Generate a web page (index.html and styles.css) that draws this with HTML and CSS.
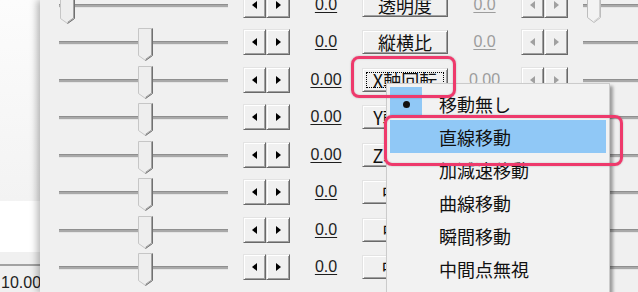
FILE: index.html
```html
<!DOCTYPE html>
<html lang="ja">
<head>
  <meta charset="UTF-8">
  <title>拡張描画</title>
  <link rel="stylesheet" href="styles.css">
</head>
<body>
  <svg class="defs" width="0" height="0">
    <defs>
      <g id="track">
        <rect x="0" y="18" width="169" height="1" fill="#8f8f8f"/>
        <rect x="0" y="19" width="169" height="2" fill="#a9a9a9"/>
        <rect x="0" y="21" width="169" height="1" fill="#e4e4e4"/>
      </g>
      <g id="thumb">
        <path d="M0.5 0.5H14.5V27.5L7.5 32.5L0.5 27.5Z" fill="#eeeeee" stroke="#c6c6c6"/>
        <path d="M13.5 1V27L7.5 31.3" fill="none" stroke="#a3a3a3"/>
        <path d="M14.5 0.5V27.5L7.5 32.5" fill="none" stroke="#707070"/>
      </g>
      <g id="thumb-off">
        <path d="M0.5 0.5H13.5V26.5L7 31.5L0.5 26.5Z" fill="#f3f3f3" stroke="#bdbdbd"/>
        <path d="M12.5 1V26L7 30.3" fill="none" stroke="#d0d0d0"/>
      </g>
    </defs>
  </svg>

  <div class="desk">
    <div class="back">
      <div class="back-top"></div>
      <div class="back-white"></div>
      <div class="back-bar"></div>
      <div class="back-foot">10.00</div>
    </div>

    <div class="win">
      <div class="rows">
        <div class="row">
          <svg class="slider" viewBox="0 0 169 38"><use href="#track"/><use href="#thumb" x="1" y="5"/></svg>
          <div class="spin"><span class="sb"><i class="tri-l"></i></span><span class="sb"><i class="tri-r"></i></span></div>
          <div class="val">0.0</div>
          <button class="name">透明度</button>
          <div class="val off">0.0</div>
          <div class="spin off"><span class="sb"><i class="tri-l"></i></span><span class="sb"><i class="tri-r"></i></span></div>
          <svg class="slider r" viewBox="0 0 169 38"><use href="#track"/><use href="#thumb-off" x="4" y="5"/></svg>
        </div>
        <div class="row">
          <svg class="slider" viewBox="0 0 169 38"><use href="#track"/><use href="#thumb" x="79" y="5"/></svg>
          <div class="spin"><span class="sb"><i class="tri-l"></i></span><span class="sb"><i class="tri-r"></i></span></div>
          <div class="val">0.0</div>
          <button class="name">縦横比</button>
          <div class="val off">0.0</div>
          <div class="spin off"><span class="sb"><i class="tri-l"></i></span><span class="sb"><i class="tri-r"></i></span></div>
          <svg class="slider r" viewBox="0 0 169 38"><use href="#track"/></svg>
        </div>
        <div class="row">
          <svg class="slider" viewBox="0 0 169 38"><use href="#track"/><use href="#thumb" x="79" y="5"/></svg>
          <div class="spin"><span class="sb"><i class="tri-l"></i></span><span class="sb"><i class="tri-r"></i></span></div>
          <div class="val">0.00</div>
          <button class="name focus">X軸回転</button>
          <div class="val off">0.00</div>
          <div class="spin off"><span class="sb"><i class="tri-l"></i></span><span class="sb"><i class="tri-r"></i></span></div>
          <svg class="slider r" viewBox="0 0 169 38"><use href="#track"/></svg>
        </div>
        <div class="row">
          <svg class="slider" viewBox="0 0 169 38"><use href="#track"/><use href="#thumb" x="79" y="5"/></svg>
          <div class="spin"><span class="sb"><i class="tri-l"></i></span><span class="sb"><i class="tri-r"></i></span></div>
          <div class="val">0.00</div>
          <button class="name">Y軸回転</button>
          <div class="val off">0.00</div>
          <div class="spin off"><span class="sb"><i class="tri-l"></i></span><span class="sb"><i class="tri-r"></i></span></div>
          <svg class="slider r" viewBox="0 0 169 38"><use href="#track"/></svg>
        </div>
        <div class="row">
          <svg class="slider" viewBox="0 0 169 38"><use href="#track"/><use href="#thumb" x="79" y="5"/></svg>
          <div class="spin"><span class="sb"><i class="tri-l"></i></span><span class="sb"><i class="tri-r"></i></span></div>
          <div class="val">0.00</div>
          <button class="name">Z軸回転</button>
          <div class="val off">0.00</div>
          <div class="spin off"><span class="sb"><i class="tri-l"></i></span><span class="sb"><i class="tri-r"></i></span></div>
          <svg class="slider r" viewBox="0 0 169 38"><use href="#track"/></svg>
        </div>
        <div class="row">
          <svg class="slider" viewBox="0 0 169 38"><use href="#track"/><use href="#thumb" x="79" y="5"/></svg>
          <div class="spin"><span class="sb"><i class="tri-l"></i></span><span class="sb"><i class="tri-r"></i></span></div>
          <div class="val">0.0</div>
          <button class="name">中心X</button>
          <div class="val off">0.0</div>
          <div class="spin off"><span class="sb"><i class="tri-l"></i></span><span class="sb"><i class="tri-r"></i></span></div>
          <svg class="slider r" viewBox="0 0 169 38"><use href="#track"/></svg>
        </div>
        <div class="row">
          <svg class="slider" viewBox="0 0 169 38"><use href="#track"/><use href="#thumb" x="79" y="5"/></svg>
          <div class="spin"><span class="sb"><i class="tri-l"></i></span><span class="sb"><i class="tri-r"></i></span></div>
          <div class="val">0.0</div>
          <button class="name">中心Y</button>
          <div class="val off">0.0</div>
          <div class="spin off"><span class="sb"><i class="tri-l"></i></span><span class="sb"><i class="tri-r"></i></span></div>
          <svg class="slider r" viewBox="0 0 169 38"><use href="#track"/></svg>
        </div>
        <div class="row">
          <svg class="slider" viewBox="0 0 169 38"><use href="#track"/><use href="#thumb" x="79" y="5"/></svg>
          <div class="spin"><span class="sb"><i class="tri-l"></i></span><span class="sb"><i class="tri-r"></i></span></div>
          <div class="val">0.0</div>
          <button class="name">中心Z</button>
          <div class="val off">0.0</div>
          <div class="spin off"><span class="sb"><i class="tri-l"></i></span><span class="sb"><i class="tri-r"></i></span></div>
          <svg class="slider r" viewBox="0 0 169 38"><use href="#track"/></svg>
        </div>
      </div>
    </div>

    <!-- popup menu over the X軸回転 button -->
    <div class="menu">
      <div class="item"><span class="chk on"><i class="dot"></i></span>移動無し</div>
      <div class="item hot"><span class="chk"></span>直線移動</div>
      <div class="item"><span class="chk"></span>加減速移動</div>
      <div class="item"><span class="chk"></span>曲線移動</div>
      <div class="item"><span class="chk"></span>瞬間移動</div>
      <div class="item"><span class="chk"></span>中間点無視</div>
    </div>

    <div class="mark m1"></div>
    <div class="mark m2"></div>
  </div>
</body>
</html>
```

FILE: styles.css
```css
* { box-sizing: border-box; }
body { margin: 0; width: 638px; height: 292px; overflow: hidden; background: #f0f0f0; font-family: "Liberation Sans", Arial, sans-serif; }
.defs { position: absolute; }

.desk { position: relative; display: flex; height: 292px; overflow: hidden; }

/* window behind, on the left */
.back { flex: none; width: 40px; display: flex; flex-direction: column; }
.back-top { height: 206px; background: linear-gradient(#fcfcfc, #f3f3f3); }
.back-white { height: 52px; background: #fff; }
.back-bar { height: 14px; background: #f0f0f0; border-bottom: 2px solid #a2a2a2; }
.back-foot { flex: 1; padding: 8px 0 0 1px; font-size: 16px; line-height: 18px; color: #222; white-space: nowrap; background: #f0f0f0; }

/* main window */
.win { flex: 1; position: relative; z-index: 1; overflow: hidden; background: #f0f0f0; box-shadow: -3px 0 7px rgba(0, 0, 0, 0.28); }
.rows { margin-top: -14px; }
.row { height: 37.5px; display: flex; align-items: center; }
.row > * { flex: none; }

.slider { width: 169px; height: 38px; margin-left: 19px; overflow: visible; }
.slider.r { margin-left: 15px; }

.spin { display: flex; margin-left: 15px; }
.spin.off { margin-left: 0; }
.sb { width: 23px; height: 26px; display: flex; align-items: center; justify-content: center; background: #f0f0f0; border: 1px solid; border-color: #e3e3e3 #696969 #696969 #e3e3e3; box-shadow: inset 1px 1px #fff, inset -1px -1px #a0a0a0; }
.sb + .sb { width: 24px; }
.tri-l { width: 0; height: 0; border-top: 4.5px solid transparent; border-bottom: 4.5px solid transparent; border-right: 5px solid #000; }
.tri-r { width: 0; height: 0; border-top: 4.5px solid transparent; border-bottom: 4.5px solid transparent; border-left: 5px solid #000; }
.off .tri-l { border-right-color: #a0a0a0; }
.off .tri-r { border-left-color: #a0a0a0; }

.val { width: 72px; text-align: center; font-size: 16px; color: #1e1e1e; text-decoration: underline; text-underline-offset: 2px; }
.val.off { width: 73px; color: #9d9d9d; }

.name { width: 86px; height: 24px; padding: 0; font: 18px "Noto Sans CJK JP", sans-serif; line-height: 20px; color: #111; background: #f0f0f0; border: 1px solid; border-color: #e3e3e3 #696969 #696969 #e3e3e3; box-shadow: inset 1px 1px #fff, inset -1px -1px #a0a0a0; }
.name.focus { outline: 1px dotted #000; outline-offset: -5px; }

/* popup menu */
.menu { position: absolute; z-index: 2; left: 386px; top: 83px; width: 224px; height: 230px; padding: 3px; background: #f2f2f2; border: 1px solid #cbcbcb; box-shadow: 3px 3px 3px rgba(0, 0, 0, 0.35); font: 18px "Noto Sans CJK JP", sans-serif; color: #111; }
.item { height: 33px; display: flex; align-items: center; }
.item.hot { background: #90c8f6; }
.chk { align-self: flex-start; width: 32px; height: 29px; margin-right: 17px; display: flex; align-items: center; justify-content: center; }
.chk.on { background: #90c8f6; }
.dot { width: 7px; height: 7px; margin-top: 5px; border-radius: 50%; background: #111; }

/* annotation frames */
.mark { position: absolute; z-index: 3; border: 3px solid #ee3a6c; border-radius: 8px; box-shadow: 0 0 2px rgba(0, 0, 0, 0.25), inset 0 0 2px rgba(0, 0, 0, 0.2); }
.m1 { left: 351px; top: 56px; width: 105px; height: 42px; }
.m2 { left: 384px; top: 115px; width: 239px; height: 51px; }
```
